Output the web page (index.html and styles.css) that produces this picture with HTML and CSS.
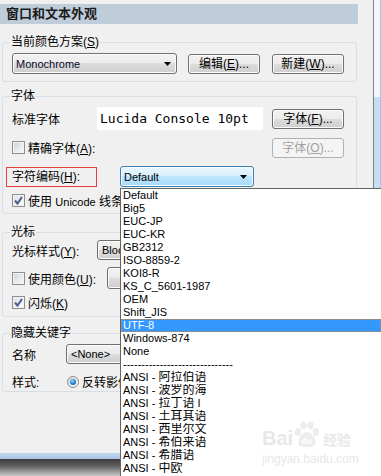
FILE: index.html
```html
<!DOCTYPE html>
<html lang="zh-CN">
<head>
<meta charset="utf-8">
<title>窗口和文本外观</title>
<link rel="stylesheet" href="styles.css">
</head>
<body>
<div class="main">
  <div class="panel">
    <div class="title">窗口和文本外观</div>

    <fieldset class="grp g1">
      <legend>当前颜色方案(<u>S</u>)</legend>
      <div class="row r-scheme">
        <div class="combo scheme"><span>Monochrome</span><svg class="arrow" width="7" height="4" viewBox="0 0 7 4"><polygon points="0,0 7,0 3.5,4" fill="#000"/></svg></div>
        <button class="btn">编辑(<u>E</u>)...</button>
        <button class="btn gap12">新建(<u>W</u>)...</button>
      </div>
    </fieldset>

    <fieldset class="grp g2">
      <legend>字体</legend>
      <div class="row r-std">
        <span class="lbl85">标准字体</span>
        <div class="fontbox">Lucida Console 10pt</div>
        <button class="btn">字体(<u>F</u>)...</button>
      </div>
      <div class="row r-exact">
        <label class="chk"><span class="cb"></span><span>精确字体(<u>A</u>):</span></label>
        <button class="btn disabled">字体(<u>O</u>)...</button>
      </div>
      <div class="row r-enc">
        <div class="redbox">字符编码(<u>H</u>):</div>
        <div class="combo enc"><span>Default</span><svg class="arrow" width="7" height="4" viewBox="0 0 7 4"><polygon points="0,0 7,0 3.5,4" fill="#000"/></svg></div>
      </div>
      <div class="row r-uni">
        <label class="chk"><span class="cb on"><svg width="11" height="11" viewBox="0 0 11 11"><path d="M2 5.5 L4.5 8.5 L9 2" fill="none" stroke="#4a5c90" stroke-width="2"/></svg></span><span>使用 <span class="lat">Unicode</span> 线条</span></label>
      </div>
    </fieldset>

    <fieldset class="grp g3">
      <legend>光标</legend>
      <div class="row r-cur">
        <span class="lbl85">光标样式(<u>Y</u>):</span>
        <div class="combo block"><span class="lat clip19">Block</span></div>
      </div>
      <div class="row r-col">
        <label class="chk w95"><span class="cb"></span><span>使用颜色(<u>U</u>):</span></label>
        <button class="btn colorbtn"></button>
      </div>
      <div class="row r-blink">
        <label class="chk"><span class="cb on"><svg width="11" height="11" viewBox="0 0 11 11"><path d="M2 5.5 L4.5 8.5 L9 2" fill="none" stroke="#4a5c90" stroke-width="2"/></svg></span><span>闪烁(<u>K</u>)</span></label>
      </div>
    </fieldset>

    <fieldset class="grp g4">
      <legend>隐藏关键字</legend>
      <div class="row r-name">
        <span class="lbl54">名称</span>
        <div class="combo none"><span class="lat">&lt;None&gt;</span></div>
      </div>
      <div class="row r-style">
        <span class="lbl54">样式:</span>
        <span class="radio"><span class="dot"></span></span>
        <span class="rtext">反转影像</span>
      </div>
    </fieldset>
  </div>
  <div class="edge"></div>
</div>
<div class="bottom">
  <div class="blue"></div>
  <div class="dark"></div>
</div>

<div class="list">
  <div>Default</div>
  <div>Big5</div>
  <div>EUC-JP</div>
  <div>EUC-KR</div>
  <div>GB2312</div>
  <div>ISO-8859-2</div>
  <div>KOI8-R</div>
  <div>KS_C_5601-1987</div>
  <div>OEM</div>
  <div>Shift_JIS</div>
  <div class="sel">UTF-8</div>
  <div>Windows-874</div>
  <div>None</div>
  <div class="dash">------------------------------</div>
  <div>ANSI - <span class="c">阿拉伯语</span></div>
  <div>ANSI - <span class="c">波罗的海</span></div>
  <div>ANSI - <span class="c">拉丁语</span> I</div>
  <div>ANSI - <span class="c">土耳其语</span></div>
  <div>ANSI - <span class="c">西里尔文</span></div>
  <div>ANSI - <span class="c">希伯来语</span></div>
  <div>ANSI - <span class="c">希腊语</span></div>
  <div>ANSI - <span class="c">中欧</span></div>
</div>

<div class="wm">
  <div class="wm-top">
    <span class="wm-bai">Bai</span>
    <svg class="paw" width="28" height="27" viewBox="0 0 28 27">
      <ellipse cx="5" cy="11" rx="3.2" ry="4" fill="#ededed"/>
      <ellipse cx="10.5" cy="4.5" rx="3.2" ry="4" fill="#ededed"/>
      <ellipse cx="17.5" cy="4.5" rx="3.2" ry="4" fill="#ededed"/>
      <ellipse cx="23" cy="11" rx="3.2" ry="4" fill="#ededed"/>
      <path d="M14 11 C8 11 4 20 6 24 C8 27 20 27 22 24 C24 20 20 11 14 11 Z" fill="#ededed"/>
      <text x="14" y="23" text-anchor="middle" font-family="Liberation Sans, sans-serif" font-weight="bold" font-size="9" fill="#fff">du</text>
    </svg>
    <span class="wm-jy">经验</span>
  </div>
  <div class="wm-url">jingyan.baidu.com</div>
</div>
</body>
</html>
```

FILE: styles.css
```css
* { box-sizing: border-box; }
html, body { margin: 0; padding: 0; }
body {
  width: 381px;
  height: 476px;
  overflow: hidden;
  position: relative;
  background: #f0f0f0;
  font-family: "Liberation Sans", "Noto Sans CJK SC", sans-serif;
  font-size: 12px;
  color: #000;
}
u { text-decoration: underline; }
.lat { font-size: 11px; }

.main { display: flex; height: 453px; }
.panel { width: 374px; flex: none; border-right: 1px solid #7f8385; background: #f0f0f0; }
.edge { flex: 1; background: linear-gradient(#f3f7fb 0, #f3f7fb 97px, #c7ddf3 97px); border-right: 1px solid #a9c6e3; }

.title {
  margin-top: 4px;
  width: 358px;
  height: 20px;
  background: #bfcddb;
  font-weight: bold;
  font-size: 13px;
  line-height: 20px;
  padding-left: 6px;
  color: #1c1c1c;
}

.grp {
  margin: 0 0 0 2px;
  width: 355px;
  min-width: 0;
  border: 1px solid #d5dfe5;
  border-radius: 3px;
  padding: 0 12px 0 9px;
}
.grp legend {
  padding: 0 1px;
  margin-left: -2px;
  line-height: 14px;
  height: 14px;
}
.g1 { margin-top: 11px; padding-top: 4px; padding-bottom: 7px; }
.g2 { margin-top: 7px; padding-top: 4px; padding-bottom: 6px; }
.g3 { margin-top: 11px; padding-top: 1px; padding-bottom: 7px; }
.g4 { margin-top: 9px; padding-top: 4px; padding-bottom: 2px; }

.row { display: flex; align-items: center; white-space: nowrap; }

/* buttons */
.btn {
  flex: none;
  width: 72px;
  height: 20px;
  padding: 0;
  border: 1px solid #707070;
  border-radius: 3px;
  background: linear-gradient(#f2f2f2 0%, #ebebeb 49%, #dddddd 50%, #cfcfcf 100%);
  box-shadow: inset 0 0 0 1px #fbfbfb;
  font: inherit;
  font-size: 12px;
  color: #000;
  line-height: 18px;
}
.btn.disabled {
  border-color: #adb2b5;
  background: #f4f4f4;
  box-shadow: none;
  color: #a0a0a0;
}
.gap12 { margin-left: 12px; }

/* combos */
.combo {
  flex: none;
  display: flex;
  align-items: center;
  justify-content: space-between;
  border: 1px solid #707070;
  border-radius: 3px;
  background: linear-gradient(#f2f2f2 0%, #ebebeb 49%, #dddddd 50%, #cfcfcf 100%);
  box-shadow: inset 0 0 0 1px #fbfbfb;
  padding: 0 5px 0 3px;
  font-size: 11px;
}
.combo .arrow { flex: none; }
.scheme { width: 165px; height: 21px; margin-right: 11px; color: #0a0a2a; }

.r-scheme { height: 21px; }

.r-std { height: 23px; }
.lbl85 { width: 85px; flex: none; }
.lbl54 { width: 54px; flex: none; }
.fontbox {
  flex: none;
  width: 166px;
  height: 23px;
  background: #fff;
  font-family: "DejaVu Sans Mono", "Liberation Mono", monospace;
  font-size: 13px;
  line-height: 23px;
  padding-left: 3px;
  margin-right: 9px;
}

.r-exact { height: 21px; margin-top: 7px; justify-content: space-between; }

.r-enc { height: 21px; margin-top: 8px; }
.redbox {
  flex: none;
  margin-left: -6px;
  width: 91px;
  height: 20px;
  border: 1px solid #e5403c;
  padding-left: 5px;
  line-height: 18px;
}
.enc {
  margin-left: 23px;
  width: 134px;
  height: 21px;
  border-color: #3c7fb1;
  background: linear-gradient(#eaf6fd 0%, #d9f0fc 49%, #bee6fd 50%, #a7d9f5 100%);
  box-shadow: inset 0 0 0 1px #f4fbff;
  padding: 0 6px 0 3px;
}

.r-uni { height: 14px; margin-top: 6px; }

.chk { display: flex; align-items: center; gap: 3px; }
.clip19 { display: block; width: 19px; overflow: hidden; }
.cb {
  flex: none;
  width: 13px;
  height: 13px;
  border: 1px solid #8e8f8f;
  background: linear-gradient(135deg, #cdd0d5 0%, #e9eaec 55%, #fbfbfb 100%);
  box-shadow: inset 0 0 0 1px #f3f3f3;
  display: flex;
  align-items: center;
  justify-content: center;
}
.cb.on { background: linear-gradient(135deg, #dcdee2 0%, #f0f1f2 55%, #fdfdfd 100%); }

.r-cur { height: 20px; }
.block { width: 130px; height: 20px; padding-left: 4px; justify-content: flex-start; }
.r-col { height: 22px; margin-top: 7px; }
.w95 { width: 95px; flex: none; }
.colorbtn { width: 40px; height: 22px; }
.r-blink { height: 14px; margin-top: 6px; }

.r-name { height: 20px; }
.none { width: 150px; height: 20px; padding-left: 4px; }
.r-style { height: 15px; margin-top: 10px; }
.radio {
  flex: none;
  width: 12px;
  height: 12px;
  margin-left: 1px;
  margin-right: 3px;
  border: 1px solid #8e8f8f;
  border-radius: 50%;
  background: linear-gradient(135deg, #d4d6da, #fafafa);
  display: flex;
  align-items: center;
  justify-content: center;
}
.radio .dot {
  width: 6px;
  height: 6px;
  border-radius: 50%;
  background: radial-gradient(circle at 40% 35%, #9fdcff 0%, #2a8ad4 45%, #0b4f94 100%);
}
.rtext { display: block; width: 38px; overflow: hidden; flex: none; }

.bottom { height: 23px; }
.blue { height: 6px; background: linear-gradient(#c2d9ee, #a6c4e2); }
.dark { height: 17px; background: linear-gradient(#3d3d3d 0%, #5e5e5e 40%, #c9c9c9 100%); }

/* open drop-down list */
.list {
  position: absolute;
  left: 120px;
  top: 188px;
  width: 261px;
  height: 288px;
  background: #fff;
  border-left: 1px solid #646464;
  border-top: 1px solid #646464;
  font-size: 11px;
}
.list div {
  height: 13px;
  line-height: 13px;
  padding-left: 2px;
  white-space: nowrap;
  overflow: hidden;
}
.list .c { font-size: 12px; }
.list .sel {
  background: #3399ff;
  color: #fff;
  outline: 1px dotted #d9822b;
  outline-offset: -1px;
}

/* watermark */
.wm {
  position: absolute;
  left: 262px;
  top: 420px;
  color: #e8e8e8;
}
.wm-top { display: flex; align-items: flex-end; height: 28px; }
.wm-bai { font-family: "Liberation Sans", sans-serif; font-weight: bold; font-size: 20px; line-height: 20px; }
.wm-jy { font-weight: bold; font-size: 14px; line-height: 16px; margin-left: 2px; }
.wm-url { font-family: "Liberation Sans", sans-serif; font-size: 12px; line-height: 14px; margin-top: 4px; }
```
